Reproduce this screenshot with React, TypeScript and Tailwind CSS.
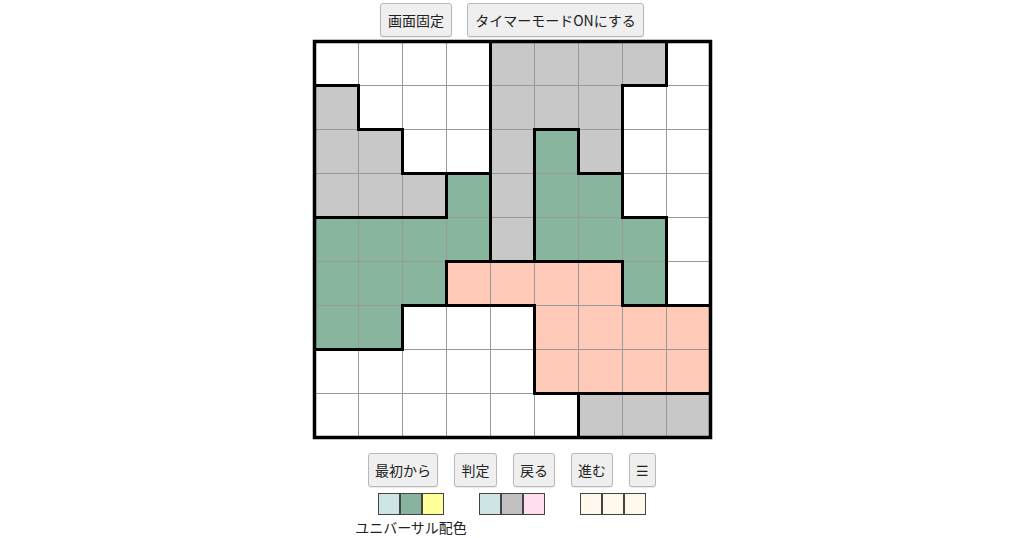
import React from "react";

const R = [
  "AAAABBBBC",
  "DAAABBBCC",
  "DDAABEBCC",
  "DDDFBEECC",
  "FFFFBEEEC",
  "FFFGGGGEC",
  "FFHHHGGGG",
  "HHHHHGGGG",
  "HHHHHHIII",
];

const COLORS: Record<string, string> = {
  A: "#ffffff",
  C: "#ffffff",
  H: "#ffffff",
  B: "#c8c8c8",
  D: "#c8c8c8",
  I: "#c8c8c8",
  E: "#88b59e",
  F: "#88b59e",
  G: "#ffcbb8",
};

const S = 44;
const O = 3.5;

function Board() {
  const cells: React.ReactNode[] = [];
  const thin: React.ReactNode[] = [];
  const thick: React.ReactNode[] = [];
  for (let r = 0; r < 9; r++) {
    for (let c = 0; c < 9; c++) {
      cells.push(
        <rect key={`c${r}-${c}`} x={O + c * S} y={O + r * S} width={S} height={S} fill={COLORS[R[r][c]]} />
      );
      if (c < 8 && R[r][c] !== R[r][c + 1]) {
        const x = O + (c + 1) * S;
        thick.push(
          <line key={`v${r}-${c}`} x1={x} y1={O + r * S} x2={x} y2={O + (r + 1) * S} stroke="#000" strokeWidth={3} strokeLinecap="square" />
        );
      }
      if (r < 8 && R[r][c] !== R[r + 1][c]) {
        const y = O + (r + 1) * S;
        thick.push(
          <line key={`h${r}-${c}`} x1={O + c * S} y1={y} x2={O + (c + 1) * S} y2={y} stroke="#000" strokeWidth={3} strokeLinecap="square" />
        );
      }
    }
  }
  for (let k = 1; k < 9; k++) {
    const p = O + k * S;
    thin.push(<line key={`tv${k}`} x1={p} y1={O} x2={p} y2={O + 9 * S} stroke="#999" strokeWidth={1} />);
    thin.push(<line key={`th${k}`} x1={O} y1={p} x2={O + 9 * S} y2={p} stroke="#999" strokeWidth={1} />);
  }
  return (
    <svg width={402} height={402} className="mt-[1px] block shrink-0">
      {cells}
      {thin}
      {thick}
      <rect x={O} y={O} width={9 * S} height={9 * S} fill="none" stroke="#000" strokeWidth={3.5} />
    </svg>
  );
}

function Btn({ children, w }: { children: React.ReactNode; w: string }) {
  return (
    <button
      className={`${w} h-[34px] flex items-center justify-center bg-[#efefef] border border-[#b8b8b8] rounded-[3px] text-[14px] leading-[20px] text-[#222] whitespace-nowrap shadow-[0_1px_1px_rgba(0,0,0,0.08)]`}
    >
      {children}
    </button>
  );
}

function Palette({ colors }: { colors: string[] }) {
  return (
    <div className="flex">
      {colors.map((c, i) => (
        <div key={i} className="w-[22px] h-[22px] border border-[#444]" style={{ backgroundColor: c }} />
      ))}
    </div>
  );
}

export default function App() {
  return (
    <div
      className="w-[1024px] h-[538px] bg-white flex flex-col items-center pt-[3px] overflow-hidden"
      style={{ fontFamily: '"Noto Sans CJK JP", "Noto Sans", sans-serif' }}
    >
      <div className="flex gap-[15px]">
        <Btn w="w-[72px]">画面固定</Btn>
        <Btn w="w-[177px]">タイマーモードONにする</Btn>
      </div>
      <Board />
      <div className="flex gap-4 mt-[13px]">
        <Btn w="w-[70px]">最初から</Btn>
        <Btn w="w-[43px]">判定</Btn>
        <Btn w="w-[42px]">戻る</Btn>
        <Btn w="w-[42px]">進む</Btn>
        <Btn w="w-[27px]">☰</Btn>
      </div>
      <div className="flex gap-[35px] mt-[6px]">
        <div className="flex flex-col items-center w-[66px]">
          <Palette colors={["#cde5e5", "#88b49c", "#ffff99"]} />
          <div className="mt-[3px] whitespace-nowrap text-[14px] leading-[18px] text-[#222]">ユニバーサル配色</div>
        </div>
        <Palette colors={["#cde5e5", "#c0c0c0", "#ffdef0"]} />
        <Palette colors={["#fff8ec", "#fff8ec", "#fff8ec"]} />
      </div>
    </div>
  );
}
